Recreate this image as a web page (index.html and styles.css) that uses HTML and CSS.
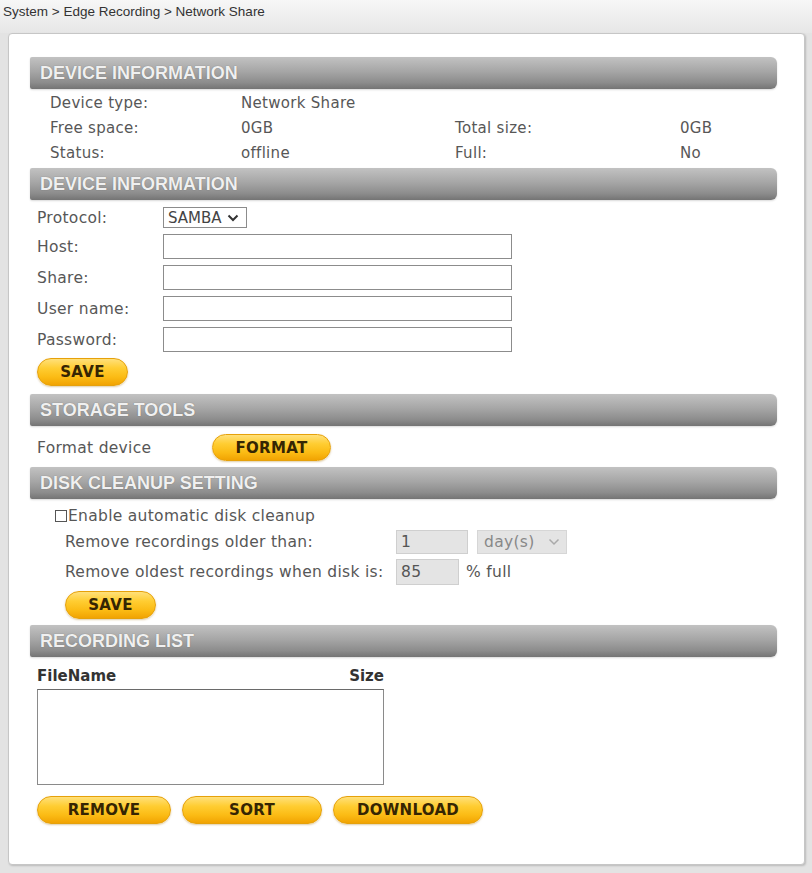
FILE: index.html
```html
<!DOCTYPE html>
<html>
<head>
<meta charset="utf-8">
<title>Network Share</title>
<link rel="stylesheet" href="styles.css">
</head>
<body>
<div class="crumb">System &gt; Edge Recording &gt; Network Share</div>
<div class="panel">
  <div class="sec-head">DEVICE INFORMATION</div>
  <div class="info">
    <span>Device type:</span><span>Network Share</span><span></span><span></span>
    <span>Free space:</span><span>0GB</span><span>Total size:</span><span>0GB</span>
    <span>Status:</span><span>offline</span><span>Full:</span><span>No</span>
  </div>

  <div class="sec-head">DEVICE INFORMATION</div>
  <div class="form">
    <div class="frow first">
      <span class="flabel">Protocol:</span>
      <div class="sel">
        <span>SAMBA</span>
        <svg width="12" height="8" viewBox="0 0 12 8"><path d="M1.5 1.5 L6 6 L10.5 1.5" fill="none" stroke="#333" stroke-width="2"/></svg>
      </div>
    </div>
    <div class="frow"><span class="flabel">Host:</span><input class="txt" type="text"></div>
    <div class="frow"><span class="flabel">Share:</span><input class="txt" type="text"></div>
    <div class="frow"><span class="flabel">User name:</span><input class="txt" type="text"></div>
    <div class="frow"><span class="flabel">Password:</span><input class="txt" type="password"></div>
    <button class="btn btn-save">SAVE</button>
  </div>

  <div class="sec-head">STORAGE TOOLS</div>
  <div class="tools">
    <span class="tlabel">Format device</span>
    <button class="btn btn-format">FORMAT</button>
  </div>

  <div class="sec-head">DISK CLEANUP SETTING</div>
  <div class="cleanup">
    <label class="chk-row"><span class="chk"></span>Enable automatic disk cleanup</label>
    <div class="crow">
      <span class="clabel">Remove recordings older than:</span>
      <span class="dis w72">1</span>
      <div class="dis-sel">
        <span>day(s)</span>
        <svg width="12" height="8" viewBox="0 0 12 8"><path d="M1.5 1.5 L6 6 L10.5 1.5" fill="none" stroke="#aaa" stroke-width="1.5"/></svg>
      </div>
    </div>
    <div class="crow second">
      <span class="clabel">Remove oldest recordings when disk is:</span>
      <span class="dis w63">85</span>
      <span class="unit">% full</span>
    </div>
    <button class="btn btn-save">SAVE</button>
  </div>

  <div class="sec-head">RECORDING LIST</div>
  <div class="reclist">
    <div class="cols"><span>FileName</span><span>Size</span></div>
    <div class="listbox"></div>
    <div class="btns">
      <button class="btn w134">REMOVE</button>
      <button class="btn w140">SORT</button>
      <button class="btn w150">DOWNLOAD</button>
    </div>
  </div>
</div>
</body>
</html>
```
FILE: styles.css
```css
html, body {
  margin: 0;
  padding: 0;
}
body {
  background: #e3e3e3;
  font-family: "DejaVu Sans", Verdana, sans-serif;
  color: #575757;
  width: 812px;
  height: 873px;
  overflow: hidden;
}
.crumb {
  height: 33px;
  box-sizing: border-box;
  padding: 4px 0 0 3px;
  font-family: "Liberation Sans", Arial, sans-serif;
  font-size: 13.5px;
  line-height: 16px;
  color: #333;
  background: linear-gradient(#f7f7f7, #e6e6e6);
}
.panel {
  margin-left: 8px;
  width: 797px;
  box-sizing: border-box;
  background: #fff;
  border: 1px solid #c6c6c6;
  border-radius: 4px;
  box-shadow: 1px 1px 2px rgba(0,0,0,0.18);
  padding: 23px 27px 40px 21px;
}
.sec-head {
  height: 32px;
  box-sizing: border-box;
  padding-left: 10px;
  font-family: "Liberation Sans", Arial, sans-serif;
  font-weight: bold;
  font-size: 18px;
  line-height: 32px;
  color: #f0f0f0;
  text-shadow: 0 0 1px rgba(0,0,0,0.4);
  background: linear-gradient(#c2c2c2 0%, #a6a6a6 45%, #8c8c8c 80%, #747474 100%);
  border-radius: 2px 6px 6px 2px;
  box-shadow: 0 1px 2px rgba(0,0,0,0.15);
}
.info {
  display: grid;
  grid-template-columns: 191px 214px 225px 1fr;
  grid-auto-rows: 25px;
  align-items: center;
  padding: 1px 0 3px 20px;
  font-size: 15px;
  letter-spacing: 0.3px;
}
.form {
  padding: 7px 0 8px 7px;
  font-size: 15.5px;
  letter-spacing: 0.3px;
}
.frow {
  display: flex;
  align-items: center;
  margin-bottom: 6px;
}
.flabel {
  width: 126px;
}
.sel {
  width: 84px;
  height: 21px;
  box-sizing: border-box;
  border: 1px solid #8c8c8c;
  display: flex;
  align-items: center;
  gap: 5px;
  padding-left: 4px;
  color: #444;
  font-size: 15px;
  letter-spacing: 0;
}
.txt {
  width: 349px;
  height: 25px;
  box-sizing: border-box;
  border: 1px solid #8c8c8c;
  margin: 0;
  padding: 0 4px;
  background: #fff;
}
.btn {
  display: block;
  height: 28px;
  box-sizing: border-box;
  border: 1px solid #e6a10a;
  border-radius: 14px;
  background: linear-gradient(#ffe07a 0%, #ffcd32 35%, #fbbb14 70%, #f1a302 100%);
  box-shadow: 0 1px 2px rgba(160,110,0,0.35);
  font-family: "DejaVu Sans", Verdana, sans-serif;
  font-weight: bold;
  font-size: 15px;
  letter-spacing: 0.3px;
  color: #352503;
  padding: 0;
  text-align: center;
  margin: 0;
}
.btn-save {
  width: 91px;
  margin-top: 2px;
}
.tools {
  display: flex;
  align-items: center;
  padding: 8px 0 6px 7px;
  font-size: 15.5px;
  letter-spacing: 0.3px;
}
.tlabel {
  width: 175px;
}
.btn-format {
  width: 119px;
  height: 27px;
}
.cleanup {
  padding: 7px 0 6px 25px;
  font-size: 15.5px;
  letter-spacing: 0.3px;
}
.chk-row {
  display: flex;
  align-items: center;
  height: 20px;
}
.chk {
  width: 12px;
  height: 12px;
  box-sizing: border-box;
  border: 1px solid #555;
  background: #fff;
  margin-right: 1px;
}
.crow {
  display: flex;
  align-items: center;
  margin-top: 4px;
  padding-left: 10px;
}
.crow.second {
  margin-top: 5px;
}
.clabel {
  width: 331px;
}
.dis {
  height: 24px;
  box-sizing: border-box;
  background: #e4e4e4;
  border: 1px solid #cfcfcf;
  color: #555;
  padding-left: 4px;
  line-height: 22px;
}
.crow.second .dis {
  height: 26px;
  line-height: 24px;
}
.w72 { width: 72px; }
.w63 { width: 63px; }
.dis-sel {
  margin-left: 9px;
  width: 90px;
  height: 24px;
  box-sizing: border-box;
  background: #e4e4e4;
  border: 1px solid #d6d6d6;
  color: #888;
  display: flex;
  align-items: center;
  justify-content: space-between;
  padding: 0 6px;
}
.unit {
  margin-left: 7px;
  color: #555;
}
.cleanup .btn-save {
  margin-left: 10px;
  margin-top: 6px;
}
.reclist {
  padding: 10px 0 0 7px;
}
.cols {
  width: 347px;
  display: flex;
  justify-content: space-between;
  font-weight: bold;
  font-size: 15px;
  line-height: 18px;
  color: #333;
}
.listbox {
  width: 347px;
  height: 96px;
  box-sizing: border-box;
  border: 1px solid #8a8a8a;
  border-top-color: #6a6a6a;
  margin-top: 4px;
}
.btns {
  display: flex;
  gap: 11px;
  margin-top: 11px;
}
.w134 { width: 134px; }
.w140 { width: 140px; }
.w150 { width: 150px; }
```
